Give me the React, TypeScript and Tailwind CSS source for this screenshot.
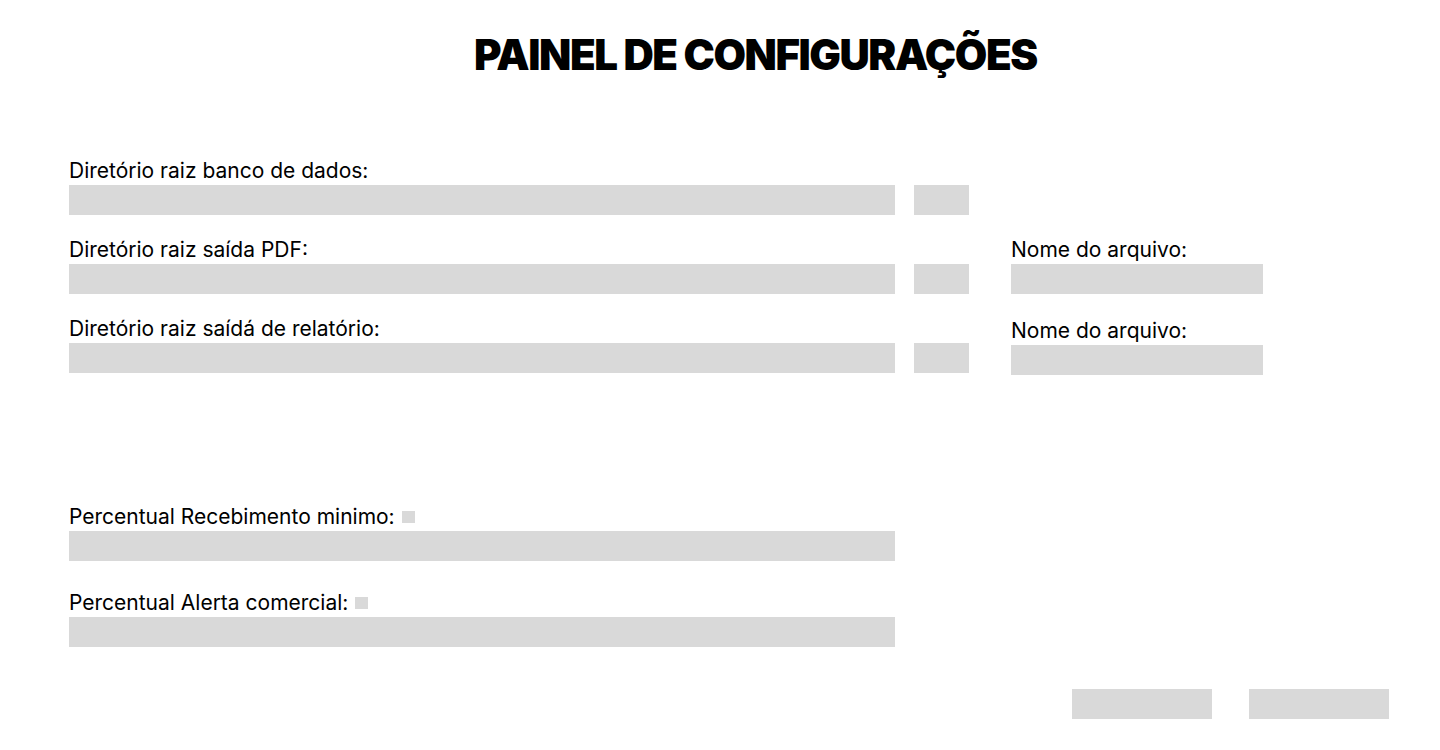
import React from 'react';

const FONT = { fontFamily: 'Inter, "Noto Sans", sans-serif' };

const Box = ({ className }: { className: string }) => <div className={`bg-[#d9d9d9] ${className}`} />;

const Label = ({ children }: { children: React.ReactNode }) => (
  <label className="text-[21px] leading-[25px] text-black -translate-y-[2px]">{children}</label>
);

const PathRow = ({ label, fileLabel, fileOffset }: { label: string; fileLabel?: string; fileOffset?: boolean }) => (
  <div className="flex items-end">
    <div className="flex flex-col w-[826px]">
      <Label>{label}</Label>
      <Box className="h-[30px] w-full" />
    </div>
    <Box className="h-[30px] w-[55px] ml-[19px]" />
    {fileLabel && (
      <div className={`flex flex-col w-[252px] ml-[42px] ${fileOffset ? 'translate-y-[2px]' : ''}`}>
        <Label>{fileLabel}</Label>
        <Box className="h-[30px] w-full" />
      </div>
    )}
  </div>
);

const PercentRow = ({ label }: { label: string }) => (
  <div className="flex flex-col w-[826px]">
    <div className="flex items-center h-[25px]">
      <Label>{label}</Label>
      <Box className="w-[13px] h-[12px] ml-[7px] -translate-y-[2px]" />
    </div>
    <Box className="h-[30px] w-full" />
  </div>
);

export default function App() {
  return (
    <div className="w-[1440px] h-[750px] bg-white overflow-hidden" style={FONT}>
      <h1 className="pt-[30px] pl-[474px] text-[42px] leading-[50px] font-black tracking-[-1.45px] text-black">
        PAINEL DE CONFIGURAÇÕES
      </h1>

      <div className="flex flex-col gap-[24px] pl-[69px] mt-[80px]">
        <PathRow label="Diretório raiz banco de dados:" />
        <PathRow label="Diretório raiz saída PDF:" fileLabel="Nome do arquivo:" />
        <PathRow label="Diretório raiz saídá de relatório:" fileLabel="Nome do arquivo:" fileOffset />
      </div>

      <div className="flex flex-col gap-[31px] pl-[69px] mt-[133px]">
        <PercentRow label="Percentual Recebimento minimo:" />
        <PercentRow label="Percentual Alerta comercial:" />
      </div>

      <div className="flex justify-end gap-[37px] pr-[51px] mt-[42px]">
        <button className="w-[140px] h-[30px] bg-[#d9d9d9]" />
        <button className="w-[140px] h-[30px] bg-[#d9d9d9]" />
      </div>
    </div>
  );
}
